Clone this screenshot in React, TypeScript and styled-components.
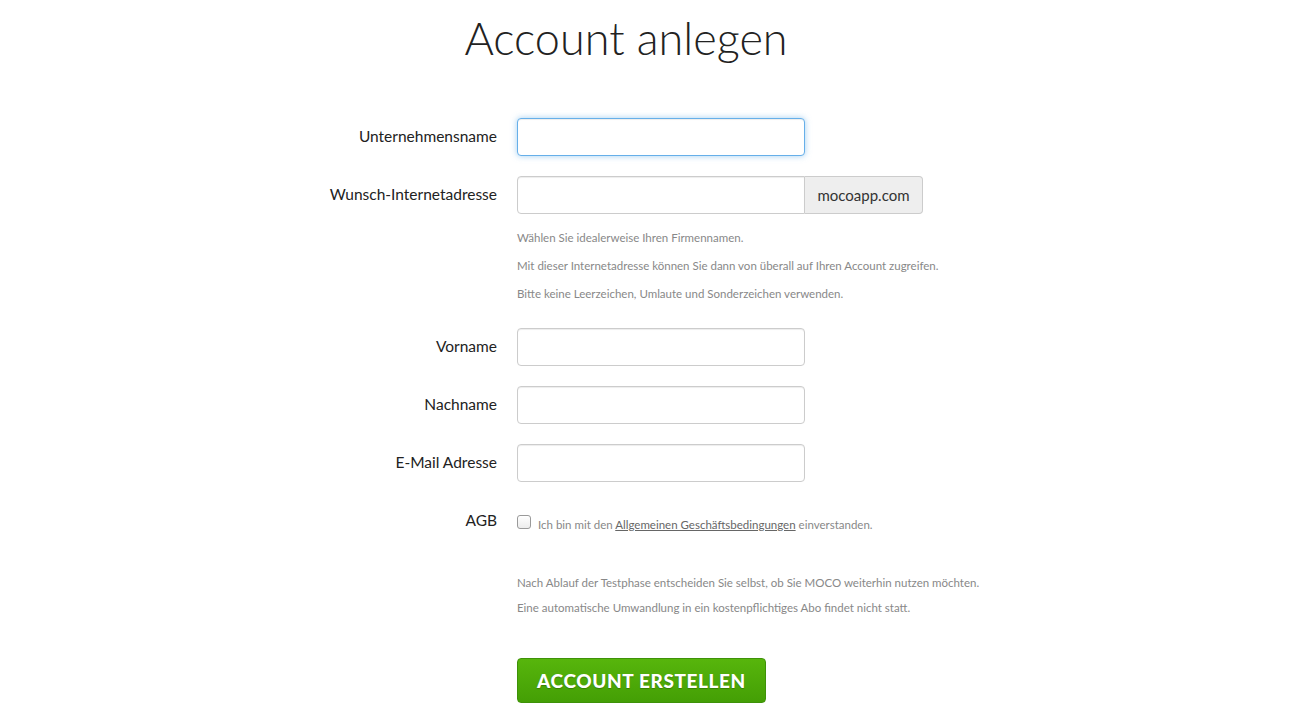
import React from "react";
import styled, { createGlobalStyle } from "styled-components";

const GlobalStyle = createGlobalStyle`
  html, body {
    margin: 0;
    padding: 0;
    background: #fff;
  }
  body {
    font-family: Lato, "Open Sans", sans-serif;
    color: #222;
  }
`;

const Page = styled.div`
  width: 1252px;
`;

const Title = styled.h1`
  margin: 0;
  padding-top: 8px;
  text-align: center;
  font-size: 45px;
  font-weight: 300;
  line-height: 60px;
  color: #222;
`;

const Form = styled.form`
  margin-top: 50px;
`;

const Row = styled.div<{ $gap?: number }>`
  display: grid;
  grid-template-columns: 497px 1fr;
  column-gap: 20px;
  align-items: center;
  margin-bottom: ${({ $gap }) => ($gap ?? 20)}px;
`;

const Label = styled.label`
  text-align: right;
  font-size: 15.5px;
  color: #222;
  margin-top: -2px;
`;

const Field = styled.div`
  display: flex;
  align-items: stretch;
`;

const Input = styled.input<{ $focused?: boolean; $joined?: boolean }>`
  box-sizing: border-box;
  width: 288px;
  height: 38px;
  padding: 6px 12px;
  font-size: 15px;
  font-family: inherit;
  border: 1px solid ${({ $focused }) => ($focused ? "#66afe9" : "#ccc")};
  border-radius: ${({ $joined }) => ($joined ? "4px 0 0 4px" : "4px")};
  box-shadow: ${({ $focused }) =>
    $focused
      ? "inset 0 1px 1px rgba(0,0,0,.075), 0 0 6px rgba(102,175,233,.6)"
      : "inset 0 1px 1px rgba(0,0,0,.075)"};
  outline: none;
`;

const Addon = styled.span`
  box-sizing: border-box;
  width: 118px;
  height: 38px;
  display: flex;
  align-items: center;
  justify-content: center;
  background: #eee;
  border: 1px solid #ccc;
  border-left: none;
  border-radius: 0 4px 4px 0;
  font-size: 15px;
  color: #333;
`;

const Help = styled.div<{ $line: number }>`
  grid-column: 2;
  margin-top: 10px;
  font-size: 11.5px;
  line-height: ${({ $line }) => $line}px;
  color: #888;
`;

const Check = styled.label`
  display: flex;
  align-items: center;
  gap: 7px;
  font-size: 11.5px;
  color: #888;
  padding-top: 6px;
`;

const Box = styled.span`
  box-sizing: border-box;
  width: 14px;
  height: 14px;
  margin-top: -4px;
  border: 1px solid #9a9a9a;
  border-radius: 3px;
  background: linear-gradient(#fff, #ececec);
  box-shadow: inset 0 1px 0 #fff;
`;

const Link = styled.a`
  color: #666;
  text-decoration: underline;
`;

const Submit = styled.button`
  grid-column: 2;
  justify-self: start;
  box-sizing: border-box;
  width: 249px;
  height: 45px;
  margin-top: 38px;
  border: 1px solid #3e9208;
  border-radius: 4px;
  background: linear-gradient(#57b50c, #449f05);
  color: #fff;
  font-family: inherit;
  font-size: 19px;
  font-weight: 900;
  letter-spacing: 0.6px;
  text-transform: uppercase;
  text-shadow: 0 1px 1px rgba(0, 0, 0, 0.25);
  cursor: pointer;
`;

const App: React.FC = () => {
  return (
    <Page>
      <GlobalStyle />
      <Title>Account anlegen</Title>
      <Form onSubmit={(e) => e.preventDefault()}>
        <Row>
          <Label>Unternehmensname</Label>
          <Field>
            <Input $focused />
          </Field>
        </Row>
        <Row>
          <Label>Wunsch-Internetadresse</Label>
          <Field>
            <Input $joined />
            <Addon>mocoapp.com</Addon>
          </Field>
          <Help $line={28}>
            <div>Wählen Sie idealerweise Ihren Firmennamen.</div>
            <div>Mit dieser Internetadresse können Sie dann von überall auf Ihren Account zugreifen.</div>
            <div>Bitte keine Leerzeichen, Umlaute und Sonderzeichen verwenden.</div>
          </Help>
        </Row>
        <Row>
          <Label>Vorname</Label>
          <Field>
            <Input />
          </Field>
        </Row>
        <Row>
          <Label>Nachname</Label>
          <Field>
            <Input />
          </Field>
        </Row>
        <Row>
          <Label>E-Mail Adresse</Label>
          <Field>
            <Input />
          </Field>
        </Row>
        <Row style={{ height: 38 }}>
          <Label>AGB</Label>
          <Check>
            <Box />
            <span>
              Ich bin mit den <Link href="#">Allgemeinen Geschäftsbedingungen</Link> einverstanden.
            </span>
          </Check>
        </Row>
        <Row>
          <Help $line={25}>
            <div>Nach Ablauf der Testphase entscheiden Sie selbst, ob Sie MOCO weiterhin nutzen möchten.</div>
            <div>Eine automatische Umwandlung in ein kostenpflichtiges Abo findet nicht statt.</div>
          </Help>
          <Submit type="submit">Account erstellen</Submit>
        </Row>
      </Form>
    </Page>
  );
};

export default App;
